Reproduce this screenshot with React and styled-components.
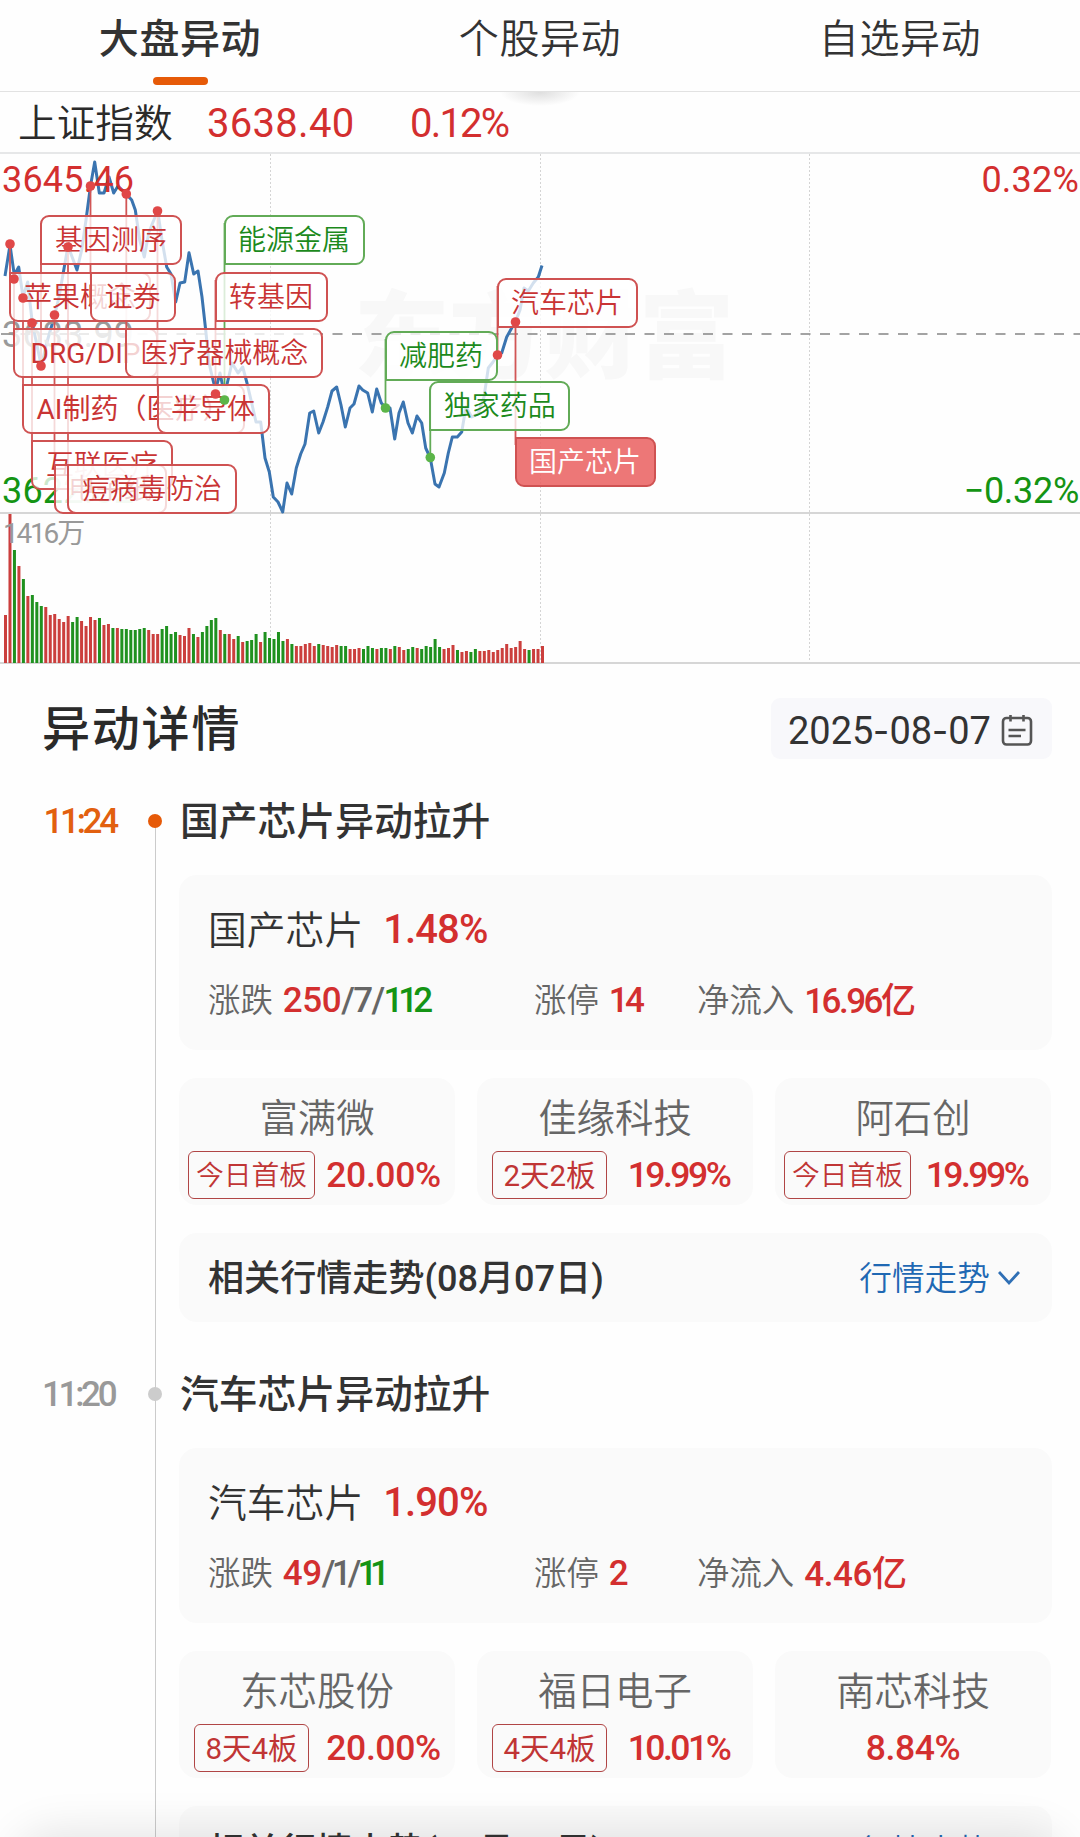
import React from 'react'
import styled, { createGlobalStyle, css } from 'styled-components'

const RED = '#d32f2f'
const GREEN = '#149414'
const GREY = '#666'

const tabs = ['大盘异动', '个股异动', '自选异动']

// one point per minute, 9:30 - 11:30
const pricePoints = [
  [5, 276], [10, 245], [14.3, 275], [18.7, 267], [23, 297], [27.7, 282], [32.3, 323], [41.3, 366],
  [46.7, 343], [54.5, 316], [59, 297], [68, 246], [77, 270], [81.7, 250], [86, 220], [90.5, 186],
  [94.7, 162], [99.3, 193], [104, 193], [109, 177], [113.7, 193], [118, 186], [126.3, 194],
  [131.7, 200], [135.3, 210], [139.7, 240], [144.3, 257], [148.7, 233], [153, 222], [157.7, 211],
  [162, 240], [166.7, 267], [171, 274], [175.7, 302], [180, 283], [184.7, 282], [189, 252.7],
  [193.7, 274], [198, 271], [202, 297], [205.7, 330], [209, 363], [213, 380], [215.5, 390],
  [220, 373], [224.5, 395], [228, 380], [232, 363], [238, 373], [242.7, 367], [247, 383],
  [251.7, 403], [256, 422], [260.7, 422], [265, 458], [269.3, 472], [273.3, 497], [278, 502],
  [282.7, 512], [287, 483], [291.7, 494], [296.3, 468], [300.7, 454], [305, 444], [309.7, 413],
  [313.7, 411], [318.7, 433], [323, 422], [327.7, 407], [332, 391], [336.7, 387], [341, 405],
  [345.3, 427], [350, 408], [354, 404], [359, 386], [362.7, 390], [367.7, 393], [372.3, 412],
  [376.7, 389], [381.3, 403], [385.7, 408], [390, 408], [394.7, 439], [399, 413], [403.3, 402],
  [408, 423], [412.3, 433], [417, 416], [421.7, 423], [425.7, 448], [430.3, 458], [435, 484],
  [439, 487], [444.3, 473], [448.3, 453], [452.3, 437], [457.3, 437], [461.7, 432], [466, 407],
  [471.7, 417], [478, 414], [484, 397], [488.3, 368], [493, 362], [497.7, 355], [501.7, 353],
  [506.7, 337], [511.7, 328], [515.3, 322], [520, 310], [524, 288], [528.3, 291], [533.3, 283],
  [538.3, 277], [542, 265.5]
]

const volumes = `
  48r 149r 113g 97r 84g 67r 68g 61g 57g 56r 48r 49r 44r 41r 47r 41g 46g 42r 37r 46r
  43r 45g 38r 39r 35g 35r 34g 34g 33g 33g 34g 35g 33r 29r 29r 34g 37g 29g 31g 28r
  27r 35r 29g 26r 31g 37g 43g 45g 33r 29g 29r 24r 27g 21r 22g 23g 29g 21r 31g 25g
  24g 31g 22g 24r 19g 17r 17r 19r 20r 17r 19g 18r 17r 16r 18r 17g 17g 14r 14r 15r
  14g 17g 15g 14r 15g 15g 14r 17g 16r 13r 14g 16g 15r 14g 17g 16g 24g 16g 14r 15r
  18r 13g 11r 12r 11g 14g 12r 12r 13r 11r 13r 15r 19r 15r 16r 22r 14r 13g 14r 14r 17r
`.trim().split(/\s+/)

// x: left edge and stem, top: flag top, dot: y of the point on the curve
const flags = [
  { text: '苹果概念', x: 10, top: 272, width: 142, dot: 244 },
  { text: 'DRG/DIP', x: 14, top: 328, width: 145, dot: 279 },
  { text: 'AI制药（医疗）', x: 23, top: 384, width: 223, dot: 298 },
  { text: '互联医疗', x: 32, top: 440, width: 142, dot: 323 },
  { text: '基因测序', x: 41, top: 215, width: 142, dot: 366 },
  { text: '电子纸', x: 54.5, top: 464, width: 113, dot: 315 },
  { text: '痘病毒防治', x: 68, top: 464, width: 170, dot: 247 },
  { text: '证券', x: 90.5, top: 272, width: 86, dot: 186 },
  { text: '医疗器械概念', x: 126.3, top: 328, width: 198, dot: 194 },
  { text: '半导体', x: 157.5, top: 384, width: 113, dot: 211 },
  { text: '转基因', x: 215.5, top: 272, width: 113, dot: 394 },
  { text: '能源金属', x: 224.5, top: 215, width: 141, dot: 400, down: true },
  { text: '减肥药', x: 385.5, top: 331, width: 113, dot: 408, down: true },
  { text: '独家药品', x: 430.3, top: 381, width: 141, dot: 457.5, down: true },
  { text: '汽车芯片', x: 497.5, top: 278, width: 141, dot: 355 },
  { text: '国产芯片', x: 515.5, top: 437, width: 141, dot: 322, active: true }
]

const events = [
  {
    time: '11:24',
    title: '国产芯片异动拉升',
    name: '国产芯片',
    change: '1.48%',
    up: '250',
    flat: '/7/',
    down: '112',
    limit: '14',
    inflow: '16.96亿',
    stocks: [
      { name: '富满微', tag: '今日首板', change: '20.00%' },
      { name: '佳缘科技', tag: '2天2板', change: '19.99%' },
      { name: '阿石创', tag: '今日首板', change: '19.99%' }
    ]
  },
  {
    time: '11:20',
    title: '汽车芯片异动拉升',
    name: '汽车芯片',
    change: '1.90%',
    up: '49',
    flat: '/1/',
    down: '11',
    limit: '2',
    inflow: '4.46亿',
    stocks: [
      { name: '东芯股份', tag: '8天4板', change: '20.00%' },
      { name: '福日电子', tag: '4天4板', change: '10.01%' },
      { name: '南芯科技', change: '8.84%' }
    ]
  }
]

const stemColor = flag => (flag.down ? '#62ab57' : '#d15555')
const dotColor = flag => (flag.down ? '#5bb548' : '#e04848')

// numbers with a 1 in them are set tighter
const tracking = text => {
  const ones = text.split('1').length - 1
  if (!ones) return -0.4
  return text.includes('.') ? -2.5 : -7.5 * ones / text.length
}

const Chart = () => (
  <ChartArea>
    <Drawing viewBox='0 152 1080 513'>
      <Watermark x='354' y='371'>东方财富</Watermark>

      <path d='M0 153H1080' stroke='#e6e7e8' strokeWidth='2' />
      <path d='M0 513H1080M0 663H1080' stroke='#d6d6d6' strokeWidth='2' />
      <path
        d='M270.5 154V662M540.5 154V662M809.5 154V662'
        stroke='#d4d4d4'
        strokeDasharray='2 2'
      />
      <path d='M1 334H1080' stroke='#858585' strokeWidth='1.6' strokeDasharray='10 9.5' />

      {volumes.map((bar, i) => {
        const height = parseInt(bar, 10)
        return (
          <rect
            key={i}
            x={4 + i * 4.475}
            y={663 - height}
            width='3'
            height={height}
            fill={bar.endsWith('r') ? '#cb3f3d' : '#1f911f'}
          />
        )
      })}

      <polyline
        points={pricePoints.map(p => p.join()).join(' ')}
        fill='none'
        stroke='#3a74b0'
        strokeWidth='3'
        strokeLinejoin='round'
      />

      <AxisText x='2' y='191.5' fill={RED}>3645.46</AxisText>
      <AxisText x='2' y='347' fill='#999'>3633.99</AxisText>
      <AxisText x='2' y='503' fill={GREEN}>3622.52</AxisText>
      <AxisText x='1079' y='191.5' fill={RED} textAnchor='end'>0.32%</AxisText>
      <AxisText x='1079' y='503' fill={GREEN} textAnchor='end' $tight>−0.32%</AxisText>
      <VolumeText x='3' y='543'>1416万</VolumeText>

      {flags.map(flag => (
        <path
          key={flag.text}
          d={`M${flag.x} ${flag.dot}V${flag.top + 8}`}
          stroke={stemColor(flag)}
          strokeWidth='1.8'
        />
      ))}
    </Drawing>

    {flags.map(flag => (
      <Flag
        key={flag.text}
        $x={flag.x - 1}
        $y={flag.top - 152}
        $width={flag.width}
        $down={flag.down}
        $active={flag.active}
        $latin={/[A-Z]/.test(flag.text)}
        $stemUp={flag.dot < flag.top}
      >
        {flag.text}
      </Flag>
    ))}

    <Dots viewBox='0 152 1080 513'>
      {flags.map(flag => (
        <circle key={flag.text} cx={flag.x} cy={flag.dot} r='4.8' fill={dotColor(flag)} />
      ))}
    </Dots>
  </ChartArea>
)

const Event = ({ event, active }) => (
  <EventBlock>
    <Time $active={active}>{event.time}</Time>
    <Rail $active={active}>
      <Bullet $active={active} />
    </Rail>
    <EventBody>
      <EventTitle>{event.title}</EventTitle>

      <Summary>
        <SummaryHead>
          <SummaryName>{event.name}</SummaryName>
          <Change>{event.change}</Change>
        </SummaryHead>
        <Stats>
          <Stat>
            <StatLabel>涨跌</StatLabel>
            <Figure $color={RED} $tracking={tracking(event.up)}>{event.up}</Figure>
            <Figure $tracking={tracking(event.flat) - 1.3}>{event.flat}</Figure>
            <Figure $color={GREEN} $tracking={tracking(event.down)}>{event.down}</Figure>
          </Stat>
          <Stat>
            <StatLabel>涨停</StatLabel>
            <Figure $color={RED} $tracking={tracking(event.limit)}>{event.limit}</Figure>
          </Stat>
          <Stat>
            <StatLabel>净流入</StatLabel>
            <Figure $color={RED} $tracking={tracking(event.inflow)} $raised>{event.inflow}</Figure>
          </Stat>
        </Stats>
      </Summary>

      <Stocks>
        {event.stocks.map(stock => (
          <Stock key={stock.name}>
            <StockName>{stock.name}</StockName>
            <StockInfo $single={!stock.tag}>
              {stock.tag && <Tag $streak={/\d/.test(stock.tag)}>{stock.tag}</Tag>}
              <StockChange $tracking={tracking(stock.change)}>{stock.change}</StockChange>
            </StockInfo>
          </Stock>
        ))}
      </Stocks>

      <Trend>
        <TrendTitle>相关行情走势(08月07日)</TrendTitle>
        <TrendLink>行情走势</TrendLink>
        <svg width='22' height='16' viewBox='0 0 22 16' fill='none'>
          <path d='M1 2L11 13L21 2' stroke='#2f6fb5' strokeWidth='2.8' />
        </svg>
      </Trend>
    </EventBody>
  </EventBlock>
)

export default function App () {
  return (
    <Page>
      <GlobalStyle />
      <Tabs>
        {tabs.map((tab, i) => (
          <Tab key={tab} $active={i === 0}>{tab}</Tab>
        ))}
      </Tabs>

      <IndexRow>
        <IndexName>上证指数</IndexName>
        <IndexValue>3638.40</IndexValue>
        <IndexChange>0.12%</IndexChange>
      </IndexRow>

      <Chart />

      <DetailHead>
        <DetailTitle>异动详情</DetailTitle>
        <DateButton>
          <DateText>2025<Hyphen>-</Hyphen>08<Hyphen>-</Hyphen>07</DateText>
          <svg width='32' height='32' viewBox='0 0 32 32' fill='none' stroke='#555' strokeWidth='2.6'>
            <rect x='2' y='4' width='28' height='26.5' rx='3.5' />
            <path d='M9.5 1V7.5M22.5 1V7.5M7.5 16H24.5M7.5 22H20' />
          </svg>
        </DateButton>
      </DetailHead>

      {events.map((event, i) => (
        <Event key={event.time} event={event} active={i === 0} />
      ))}
      <BottomShade />
    </Page>
  )
}

const GlobalStyle = createGlobalStyle`
  body {
    margin: 0;
    background: #fefefe;
  }
  * {
    box-sizing: border-box;
  }
`

const Page = styled.div`
  position: relative;
  width: 1080px;
  height: 1837px;
  overflow: hidden;
  background: #fefefe;
  color: #333;
  font-family: Roboto, 'Noto Sans CJK SC', sans-serif;
  white-space: nowrap;
`

const Tabs = styled.div`
  display: grid;
  grid-template-columns: repeat(3, 1fr);
  height: 92px;
  border-bottom: 1px solid #e2e2e2;
`

const Tab = styled.div`
  display: flex;
  flex-direction: column;
  align-items: center;
  padding-top: 10px;
  font-size: 40px;
  line-height: 60px;
  letter-spacing: 0.6px;
  font-weight: ${p => (p.$active ? 500 : 350)};
  ${p => p.$active && css`
    &::after {
      content: '';
      width: 55px;
      height: 8px;
      margin-top: 7px;
      border-radius: 4px;
      background: #e65a08;
    }
  `}
`

const IndexRow = styled.div`
  display: flex;
  align-items: center;
  height: 60px;
  padding: 2px 0 0 18px;
  font-size: 40px;
  background: radial-gradient(ellipse 40px 14px at 540px 0, #dedede, transparent);
`

const IndexName = styled.span`
  width: 189px;
  padding-bottom: 6px;
  font-size: 38.7px;
  font-weight: 350;
  color: #2a2a2a;
`

const IndexValue = styled.span`
  width: 203px;
  letter-spacing: 0.3px;
  color: ${RED};
`

const IndexChange = styled.span`
  letter-spacing: -1.8px;
  color: ${RED};
`

const ChartArea = styled.div`
  position: relative;
  height: 513px;
`

const Drawing = styled.svg`
  display: block;
  width: 1080px;
  height: 513px;
`

const Dots = styled(Drawing)`
  position: absolute;
  top: 0;
  left: 0;
`

const Watermark = styled.text`
  font-family: 'Noto Sans CJK SC', sans-serif;
  font-size: 95px;
  font-weight: 900;
  fill: #f8f8f8;
`

const AxisText = styled.text`
  font-size: 36px;
  letter-spacing: ${p => (p.$tight ? '-0.3px' : '0.2px')};
`

const VolumeText = styled.text`
  font-size: 28px;
  letter-spacing: -2.2px;
  fill: #999;
`

const Flag = styled.div`
  position: absolute;
  left: ${p => p.$x}px;
  top: ${p => p.$y}px;
  width: ${p => p.$width}px;
  height: 50px;
  border: 2px solid ${p => (p.$down ? '#62ab57' : '#cf5252')};
  border-radius: ${p => (p.$stemUp ? '0 9px 9px 9px' : '9px 9px 9px 0')};
  background: ${p => (p.$active ? 'rgba(235, 100, 100, 0.88)' : 'rgba(255, 255, 255, 0.78)')};
  color: ${p => (p.$active ? '#fff' : p.$down ? '#1c8a1c' : '#c93434')};
  font-size: 28px;
  font-weight: ${p => (p.$latin ? 400 : 350)};
  line-height: 48px;
  text-align: center;
`

const DetailHead = styled.div`
  display: flex;
  justify-content: space-between;
  align-items: center;
  height: 61px;
  margin: 33px 28px 0 42px;
`

const DetailTitle = styled.h2`
  margin: 0;
  padding-bottom: 8px;
  font-size: 48px;
  font-weight: 500;
  letter-spacing: 1.8px;
  color: #2a2a2a;
`

const DateButton = styled.div`
  display: flex;
  align-items: center;
  width: 281px;
  height: 61px;
  padding: 2px 0 0 17px;
  border-radius: 9px;
  background: #f8f8fb;
  svg {
    margin-left: 10px;
  }
`

const DateText = styled.div`
  display: flex;
  padding-top: 3px;
  font-size: 38px;
`

const Hyphen = styled.span`
  width: 16px;
  text-align: center;
  transform: scaleX(1.25);
`

const EventBlock = styled.div`
  display: grid;
  grid-template-columns: 145px 21px 1fr;
  height: 573px;
`

const Time = styled.div`
  padding: 43px 0 0 ${p => (p.$active ? 43.5 : 42)}px;
  font-size: 35px;
  line-height: 40px;
  font-weight: 500;
  letter-spacing: -3.3px;
  color: ${p => (p.$active ? '#e2600f' : '#999')};
`

const Rail = styled.div`
  display: flex;
  padding: 55px 0 0 3px;
  background: linear-gradient(#cbcbcb, #cbcbcb) 10px ${p => (p.$active ? '62px' : '0')} / 1px 100% no-repeat;
`

const Bullet = styled.span`
  width: 14px;
  height: 14px;
  border-radius: 50%;
  background: ${p => (p.$active ? '#e65a08' : '#ccc')};
`

const EventBody = styled.div`
  margin-left: 13px;
  width: 873px;
`

const EventTitle = styled.h3`
  margin: 0;
  padding: 34px 0 0 1px;
  height: 116px;
  font-size: 38.8px;
  line-height: 58px;
  font-weight: 500;
`

const Summary = styled.div`
  height: 175px;
  padding: 27px 0 0 29px;
  border-radius: 18px;
  background: #fafafa;
`

const SummaryHead = styled.div`
  display: flex;
  align-items: center;
  height: 54px;
`

const SummaryName = styled.span`
  padding-bottom: 5px;
  font-size: 38.8px;
  font-weight: 350;
`

const Change = styled.span`
  margin-left: 20px;
  padding-top: 1px;
  font-size: 40px;
  font-weight: 500;
  letter-spacing: -0.9px;
  color: ${RED};
`

const Stats = styled.div`
  display: grid;
  grid-template-columns: 326px 163px 1fr;
  height: 50px;
  margin-top: 16px;
`

const Stat = styled.div`
  display: flex;
  align-items: center;
  color: ${GREY};
`

const StatLabel = styled.span`
  margin-right: 10px;
  padding-bottom: 6px;
  font-size: 32.4px;
  font-weight: 350;
`

const Figure = styled.span`
  font-size: 35px;
  font-weight: 500;
  letter-spacing: ${p => p.$tracking}px;
  padding-bottom: ${p => (p.$raised ? 6 : 0)}px;
  color: ${p => p.$color || 'inherit'};
`

const Stocks = styled.div`
  display: grid;
  grid-template-columns: repeat(3, 276px);
  column-gap: 22px;
  margin-top: 28px;
`

const Stock = styled.div`
  height: 127px;
  padding-top: 11px;
  border-radius: 18px;
  background: #fafafa;
`

const StockName = styled.div`
  height: 57px;
  font-size: 38.4px;
  font-weight: 350;
  line-height: 59px;
  text-align: center;
  color: ${GREY};
`

const StockInfo = styled.div`
  display: grid;
  grid-template-columns: ${p => (p.$single ? '1fr' : '145px 119px')};
  align-items: center;
  justify-items: center;
  height: 58px;
`

const Tag = styled.span`
  height: 48px;
  padding: 0 ${p => (p.$streak ? 10.5 : 7)}px;
  border: 1px solid #b04545;
  border-radius: 6px;
  font-size: ${p => (p.$streak ? 29.5 : 27.8)}px;
  font-weight: ${p => (p.$streak ? 400 : 350)};
  line-height: 48px;
  color: #c03535;
`

const StockChange = styled.span`
  padding-right: ${p => (p.$tracking < -1 ? 6 : 0)}px;
  font-size: 35.5px;
  font-weight: 500;
  letter-spacing: ${p => p.$tracking}px;
  color: ${RED};
`

const Trend = styled.div`
  display: flex;
  align-items: center;
  height: 89px;
  margin-top: 28px;
  padding: 0 32px 0 29px;
  border-radius: 18px;
  background: #fafafa;
`

const TrendTitle = styled.span`
  flex: 1;
  padding-bottom: 5px;
  font-size: 36.1px;
  font-weight: 500;
`

const TrendLink = styled.span`
  margin-right: 8px;
  padding-bottom: 4px;
  font-size: 32.7px;
  font-weight: 350;
  color: #1f68b3;
`

const BottomShade = styled.div`
  position: absolute;
  left: 30px;
  right: 30px;
  bottom: -60px;
  height: 50px;
  border-radius: 30px;
  box-shadow: 0 0 44px 16px rgba(0, 0, 0, 0.1);
`
